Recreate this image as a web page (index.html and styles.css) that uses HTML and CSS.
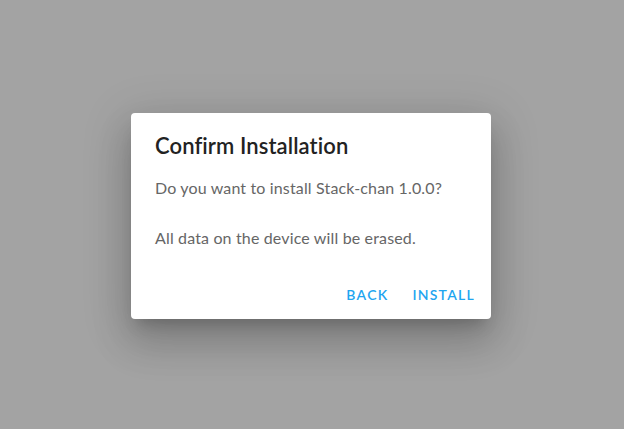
FILE: index.html
```html
<!DOCTYPE html>
<html>
<head>
<meta charset="utf-8">
<link rel="stylesheet" href="styles.css">
</head>
<body>
<div class="backdrop">
  <div class="dialog">
    <h2 class="title">Confirm Installation</h2>
    <div class="content">
      <p class="text">Do you want to install Stack-chan 1.0.0?</p>
      <p class="text">All data on the device will be erased.</p>
    </div>
    <div class="actions">
      <button class="btn">Back</button>
      <button class="btn">Install</button>
    </div>
  </div>
</div>
</body>
</html>
```
FILE: styles.css
```css
html, body {
  margin: 0;
  height: 100%;
}
body {
  background: #a3a3a3;
  font-family: Lato, "Liberation Sans", sans-serif;
}
.backdrop {
  height: 100%;
  display: flex;
  align-items: center;
  justify-content: center;
}
.dialog {
  width: 360px;
  background: #fff;
  border-radius: 4px;
  box-shadow: 0 11px 15px -7px rgba(0,0,0,0.2), 0 24px 38px 3px rgba(0,0,0,0.14), 0 9px 46px 8px rgba(0,0,0,0.12);
  box-sizing: border-box;
  margin-top: 2px;
  margin-right: 2px;
}
.title {
  margin: 0;
  padding: 17px 24px 14px;
  font-size: 22px;
  line-height: 32px;
  font-weight: 600;
  color: #222;
  letter-spacing: 0.1px;
}
.content {
  padding: 0 24px;
  display: flex;
  flex-direction: column;
  gap: 26px;
}
.text {
  margin: 0;
  font-size: 16px;
  line-height: 24px;
  color: #666;
  letter-spacing: 0.15px;
}
.actions {
  display: flex;
  justify-content: flex-end;
  gap: 8px;
  padding: 0 8px 6px;
  margin-top: 27px;
}
.btn {
  border: 0;
  background: none;
  font-family: inherit;
  font-size: 14px;
  font-weight: 600;
  letter-spacing: 1.25px;
  text-transform: uppercase;
  color: #1ea5f0;
  height: 36px;
  padding: 0 8px;
}
```
